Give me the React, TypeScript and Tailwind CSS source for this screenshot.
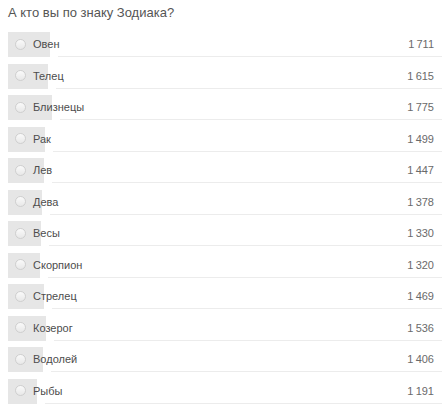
import React from 'react';

interface Sign {
    name: string;
    votes: number;
}

const SIGNS: Sign[] = [
    { name: 'Овен', votes: 1711 },
    { name: 'Телец', votes: 1615 },
    { name: 'Близнецы', votes: 1775 },
    { name: 'Рак', votes: 1499 },
    { name: 'Лев', votes: 1447 },
    { name: 'Дева', votes: 1378 },
    { name: 'Весы', votes: 1330 },
    { name: 'Скорпион', votes: 1320 },
    { name: 'Стрелец', votes: 1469 },
    { name: 'Козерог', votes: 1536 },
    { name: 'Водолей', votes: 1406 },
    { name: 'Рыбы', votes: 1191 },
];

const TOTAL = SIGNS.reduce((s, x) => s + x.votes, 0);
const ROW_WIDTH = 434;

const formatVotes = (n: number) => n.toLocaleString('ru-RU').replace(/\s/g, '\u2009');

export default function App() {
    return (
        <div className="w-[448px] h-[407px] bg-white overflow-hidden font-['Liberation_Sans',Arial,sans-serif]">
            <div className="pl-2 pt-[3px] h-[32px] text-[13px] text-[#555]">А кто вы по знаку Зодиака?</div>
            <div className="pl-2 pr-[6px]">
                {SIGNS.map((sign) => {
                    const barWidth = Math.round((sign.votes / TOTAL) * ROW_WIDTH);
                    return (
                        <div key={sign.name} className="relative h-[31.5px]">
                            <div className="absolute left-0 top-0 h-[25px] bg-[#e6e6e6]" style={{ width: barWidth }} />
                            <div
                                className="absolute right-0 top-[24px] h-px bg-[#ececec]"
                                style={{ left: barWidth + 8 }}
                            />
                            <div className="relative flex items-center h-[25px] pl-[7px] pr-[8px]">
                                <span className="w-[11px] h-[11px] -mt-px rounded-full border border-[#cfcfcf] bg-gradient-to-b from-[#fafafa] to-[#e8e8e8] mr-[7px]" />
                                <span className="text-[11px] text-[#4d4d4d]">{sign.name}</span>
                                <span className="ml-auto text-[11px] text-[#6a6a6a]">{formatVotes(sign.votes)}</span>
                            </div>
                        </div>
                    );
                })}
            </div>
        </div>
    );
}
